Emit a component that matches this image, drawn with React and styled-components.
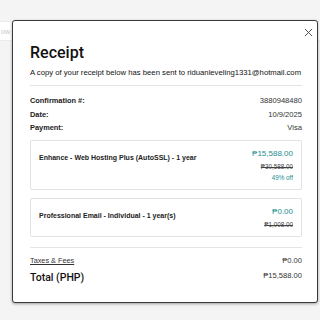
import React from "react";
import styled, { createGlobalStyle } from "styled-components";

const Global = createGlobalStyle`
  html, body { margin: 0; padding: 0; background: #f4f4f4; }
  body { font-family: "Liberation Sans", Arial, sans-serif; color: #111; }
  * { box-sizing: border-box; }
`;

const Page = styled.div`
  width: 320px;
  height: 320px;
  position: relative;
  overflow: hidden;
  padding-top: 21px;
`;

const BackBar = styled.div`
  height: 20px;
  background: #fff;
  border-top: 1px solid #ececec;
  border-bottom: 1px solid #ececec;
  display: flex;
  align-items: center;
  font-size: 7px;
  color: #c8c8c8;
  padding-left: 1px;
`;

const Modal = styled.div`
  position: absolute;
  left: 12px;
  top: 20px;
  width: 306px;
  height: 283px;
  background: #fff;
  border: 1px solid #3a3a3a;
  border-radius: 3px;
  box-shadow: 0 1px 3px rgba(0, 0, 0, 0.35);
  padding: 22px 15px 0 17px;
  display: flex;
  flex-direction: column;
`;

const Close = styled.button`
  position: absolute;
  right: 3px;
  top: 5px;
  width: 12px;
  height: 12px;
  padding: 0;
  border: none;
  background: none;
  display: flex;
  align-items: center;
  justify-content: center;
`;

const Title = styled.h1`
  margin: 0;
  font-family: Roboto, "Liberation Sans", sans-serif;
  font-size: 16px;
  line-height: 19px;
  font-weight: 500;
  color: #111;
`;

const Sub = styled.p`
  margin: 6px 0 0;
  font-size: 7.7px;
  line-height: 9px;
  color: #111;
  white-space: nowrap;
`;

const Divider = styled.hr`
  border: none;
  border-top: 1px solid #e4e4e4;
  margin: ${(p) => p.$m || "8px 0 0"};
  width: 100%;
`;

const Rows = styled.div`
  display: flex;
  flex-direction: column;
  gap: 4.5px;
  margin-top: ${(p) => p.$mt ?? 10}px;
`;

const Row = styled.div`
  display: flex;
  justify-content: space-between;
  align-items: center;
  font-size: 7.4px;
  line-height: 9px;
  font-weight: 700;
  color: #222;
`;

const Value = styled.span`
  font-weight: 400;
  font-size: 7.6px;
  color: #333;
`;

const Card = styled.div`
  border: 1px solid #e3e3e3;
  border-radius: 2px;
  padding: 7px 8px 7px;
  display: flex;
  justify-content: space-between;
  align-items: flex-start;
  margin-top: ${(p) => p.$mt || 0}px;
`;

const Name = styled.div`
  font-size: 7px;
  line-height: 9px;
  font-weight: 700;
  color: #222;
  margin-top: 5px;
`;

const Prices = styled.div`
  display: flex;
  flex-direction: column;
  align-items: flex-end;
  gap: 2.5px;
`;

const Price = styled.div`
  font-size: 8px;
  line-height: 11px;
  color: #1a8d92;
`;

const Strike = styled.div`
  font-size: 6.3px;
  line-height: 9px;
  color: #444;
  text-decoration: line-through;
`;

const Off = styled.div`
  font-size: 6.3px;
  line-height: 9px;
  color: #1a8d92;
`;

const Taxes = styled.a`
  font-weight: 400;
  font-size: 7.3px;
  color: #333;
  text-decoration: underline;
`;

const TotalRow = styled.div`
  display: flex;
  justify-content: space-between;
  align-items: flex-start;
  margin-top: 5.5px;
`;

const TotalLabel = styled.div`
  font-family: Roboto, "Liberation Sans", sans-serif;
  font-size: 10.5px;
  line-height: 14px;
  font-weight: 500;
  color: #111;
`;

const TotalValue = styled.div`
  font-size: 7.6px;
  line-height: 9px;
  color: #333;
  margin-top: 0;
`;

export default function App() {
  return (
    <Page>
      <Global />
      <BackBar>ow</BackBar>
      <Modal>
        <Close aria-label="close">
          <svg width="9" height="9" viewBox="0 0 10 10">
            <path d="M1 1L9 9M9 1L1 9" stroke="#444" strokeWidth="1" />
          </svg>
        </Close>
        <Title>Receipt</Title>
        <Sub>
          A copy of your receipt below has been sent to riduanleveling1331@hotmail.com
        </Sub>
        <Divider $m="8px 0 0" />
        <Rows>
          <Row>
            <span>Confirmation #:</span>
            <Value>3880948480</Value>
          </Row>
          <Row>
            <span>Date:</span>
            <Value>10/9/2025</Value>
          </Row>
          <Row>
            <span>Payment:</span>
            <Value>Visa</Value>
          </Row>
        </Rows>
        <Card $mt={8}>
          <Name>Enhance - Web Hosting Plus (AutoSSL) - 1 year</Name>
          <Prices>
            <Price>₱15,588.00</Price>
            <Strike>₱30,588.00</Strike>
            <Off>49% off</Off>
          </Prices>
        </Card>
        <Card $mt={8}>
          <Name>Professional Email - Individual - 1 year(s)</Name>
          <Prices>
            <Price>₱0.00</Price>
            <Strike>₱1,008.00</Strike>
          </Prices>
        </Card>
        <Divider $m="10px 0 0" />
        <Rows $mt={8.5}>
          <Row>
            <Taxes>Taxes &amp; Fees</Taxes>
            <Value>₱0.00</Value>
          </Row>
        </Rows>
        <TotalRow>
          <TotalLabel>Total (PHP)</TotalLabel>
          <TotalValue>₱15,588.00</TotalValue>
        </TotalRow>
      </Modal>
    </Page>
  );
}
